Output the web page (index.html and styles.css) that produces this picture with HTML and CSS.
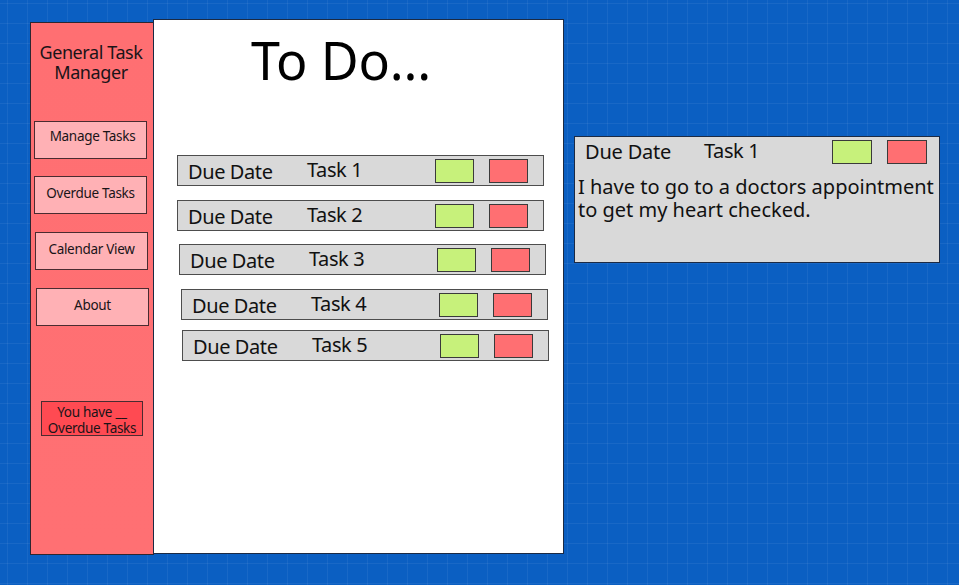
FILE: index.html
```html
<!DOCTYPE html>
<html lang="en">
<head>
<meta charset="utf-8">
<title>General Task Manager</title>
<link rel="stylesheet" href="styles.css">
</head>
<body>
<div class="canvas">
  <div class="app">
    <aside class="sidebar">
      <h1 class="brand">General Task<br>Manager</h1>
      <nav class="nav">
        <a class="nav-btn nav-btn--first">Manage Tasks</a>
        <a class="nav-btn">Overdue Tasks</a>
        <a class="nav-btn nav-btn--b">Calendar View</a>
        <a class="nav-btn nav-btn--c">About</a>
      </nav>
      <div class="badge">You have __<br>Overdue Tasks</div>
    </aside>
    <main class="main">
      <h2 class="title">To Do...</h2>
      <ul class="tasks">
        <li class="task task--1"><span class="due">Due Date</span><span class="name">Task 1</span><span class="box box--ok"></span><span class="box box--no"></span></li>
        <li class="task task--2"><span class="due">Due Date</span><span class="name">Task 2</span><span class="box box--ok"></span><span class="box box--no"></span></li>
        <li class="task task--3"><span class="due">Due Date</span><span class="name">Task 3</span><span class="box box--ok"></span><span class="box box--no"></span></li>
        <li class="task task--4"><span class="due">Due Date</span><span class="name">Task 4</span><span class="box box--ok"></span><span class="box box--no"></span></li>
        <li class="task task--5"><span class="due">Due Date</span><span class="name">Task 5</span><span class="box box--ok"></span><span class="box box--no"></span></li>
      </ul>
    </main>
  </div>
  <section class="detail">
    <div class="detail-head"><span class="due">Due Date</span><span class="name">Task 1</span><span class="box box--ok"></span><span class="box box--no"></span></div>
    <p class="detail-text">I have to go to a doctors appointment<br>to get my heart checked.</p>
  </section>
</div>
</body>
</html>
```

FILE: styles.css
```css
* { box-sizing: border-box; }
html, body { margin: 0; padding: 0; }
body {
  width: 959px;
  height: 585px;
  overflow: hidden;
  font-family: "Noto Sans", "Open Sans", sans-serif;
  color: #111;
  background-color: #0b5fc2;
  background-image:
    linear-gradient(to right, rgba(255,255,255,0.06) 1px, transparent 1px),
    linear-gradient(to bottom, rgba(255,255,255,0.06) 1px, transparent 1px);
  background-size: 20px 20px;
  background-position: 7px 3px;
}
.canvas {
  display: flex;
  align-items: flex-start;
  padding: 19px 0 0 30px;
}
.app {
  display: flex;
  align-items: flex-start;
}
.sidebar {
  margin-top: 3px;
  width: 124px;
  height: 533px;
  background: linear-gradient(to bottom, #ff6f72, #ff7073);
  border: 1.5px solid #2d2630;
  display: flex;
  flex-direction: column;
  padding: 19px 0 0 3px;
}
.brand {
  margin: 0;
  font-weight: 400;
  font-size: 18px;
  line-height: 20px;
  text-align: center;
  letter-spacing: -0.4px;
  padding-right: 5px;
  color: #1a1418;
}
.nav {
  display: flex;
  flex-direction: column;
  gap: 17px;
  margin-top: 39px;
}
.nav-btn {
  display: flex;
  align-items: center;
  justify-content: center;
  width: 113px;
  height: 38px;
  background: #ffb1b5;
  border: 1.5px solid #4a2b30;
  font-size: 13.5px;
  letter-spacing: -0.3px;
  color: #1a1418;
  padding-bottom: 4px;
}
.nav-btn--first { padding-left: 4px; padding-bottom: 9px; }
.nav-btn--b { margin-left: 1px; margin-top: 1px; }
.nav-btn--c { margin-left: 2px; margin-top: 1px; }
.badge {
  margin: 75px 0 0 7px;
  width: 102px;
  height: 35px;
  background: #ff4a52;
  border: 1.5px solid #4a2b30;
  font-size: 13.5px;
  line-height: 15.5px;
  text-align: center;
  padding-top: 3px;
  letter-spacing: -0.3px;
  color: #1a1418;
}
.main {
  width: 411px;
  height: 535px;
  margin-left: -1px;
  background: #fff;
  border: 1.5px solid #1b2a44;
  padding: 0 0 0 23px;
}
.title {
  margin: 0;
  padding: 5px 0 0 74px;
  font-weight: 400;
  font-size: 52px;
  line-height: 70px;
  letter-spacing: -0.2px;
  color: #000;
}
.tasks {
  list-style: none;
  margin: 60px 0 0;
  padding: 0;
  display: flex;
  flex-direction: column;
}
.task, .detail-head {
  display: grid;
  grid-template-columns: 104px 1fr 39px 39px;
  column-gap: 15px;
  align-items: center;
}
.task {
  width: 367px;
  height: 31px;
  background: #d9d9d9;
  border: 1.5px solid #4d4d4d;
  padding: 0 15px 0 10px;
}
.task--2 { margin-top: 14px; }
.task--3 { margin-top: 13px; margin-left: 2px; }
.task--4 { margin-top: 14px; margin-left: 4px; }
.task--5 { margin-top: 10px; margin-left: 5px; }
.due {
  font-size: 20px;
  letter-spacing: -0.4px;
  line-height: 24px;
  padding-top: 3px;
  white-space: nowrap;
}
.name {
  font-size: 20px;
  letter-spacing: -0.4px;
  line-height: 24px;
  margin-top: -2px;
  white-space: nowrap;
}
.box {
  height: 24px;
  border: 1.5px solid #3a3a3a;
}
.box--ok { background: #c7f17b; }
.box--no { background: #ff6f72; }
.detail {
  margin: 117px 0 0 10px;
  width: 366px;
  height: 127px;
  background: #d9d9d9;
  border: 1.5px solid #1b2a44;
  padding: 2px 12px 0 3px;
}
.detail-head {
  padding-left: 7px;
  grid-template-columns: 104px 1fr 40px 40px;
}
.detail-head .due { padding-top: 1px; letter-spacing: -0.2px; }
.detail-text {
  margin: 11px 0 0;
  font-size: 20px;
  line-height: 23px;
  letter-spacing: 0;
  white-space: nowrap;
}
```
